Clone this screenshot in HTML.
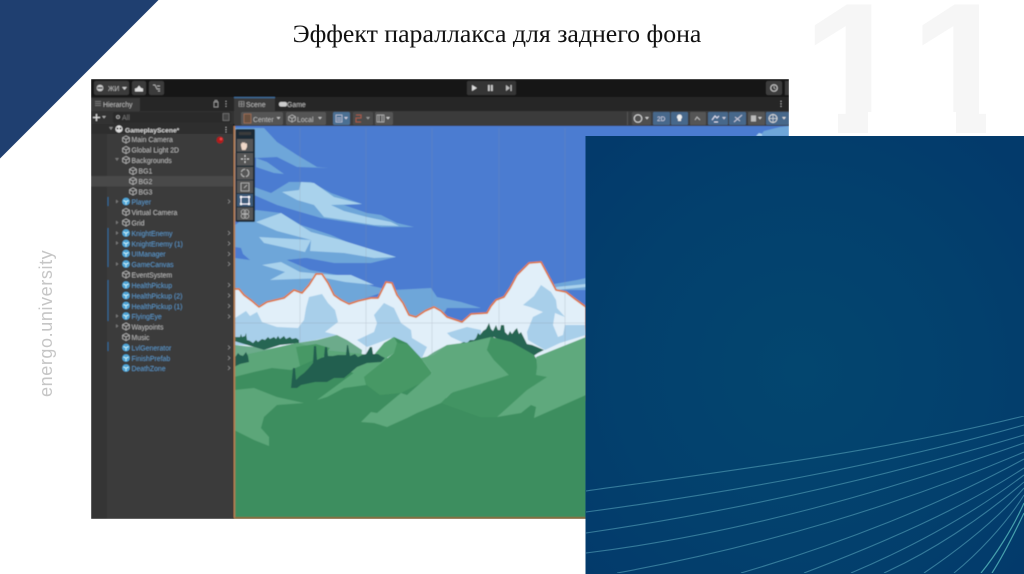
<!DOCTYPE html>
<html lang="ru"><head><meta charset="utf-8"><title>Эффект параллакса</title>
<style>
html,body{margin:0;padding:0;background:#fff;width:1024px;height:574px;overflow:hidden}
svg{display:block;position:absolute;left:0;top:0}
.u{font-family:"Liberation Sans",sans-serif;font-size:6.9px;fill:#b8b8b8}
.b{fill:#5b97c8}
.i{fill:none;stroke:#b5b5b5;stroke-width:.8}
</style></head><body>
<svg width="1024" height="574" viewBox="0 0 1024 574" xmlns="http://www.w3.org/2000/svg">
<defs>
<filter id="s" x="0" y="0" width="100%" height="100%"><feGaussianBlur stdDeviation=".4"/></filter>
<filter id="l" x="0" y="0" width="100%" height="100%"><feGaussianBlur stdDeviation=".3"/></filter>
<clipPath id="sc"><rect x="235" y="126" width="554" height="392"/></clipPath>
<radialGradient id="p" gradientUnits="userSpaceOnUse" cx="800" cy="370" r="300">
<stop offset="0" stop-color="#03466f"/><stop offset=".6" stop-color="#03406d"/><stop offset="1" stop-color="#033a6b"/></radialGradient>
<g id="c"><path class="i" d="M0-3.600 3.400-1.800V1.800L0 3.600-3.400 1.800V-1.800ZM-3.400-1.800 0 0 3.400-1.800M0 0V3.600"/></g>
<g id="q"><circle r="3.800" fill="#4fa6d8"/><path d="M-2.500-1 0 .2 2.500-1M0 .2V3" stroke="#dff" stroke-width=".7" fill="none"/></g>
</defs>
<polygon points="0,0 158.500,0 0,158.500" fill="#1f3f70"/>
<text x="802" y="133" font-family="Liberation Sans,sans-serif" font-weight="700" font-size="187" letter-spacing="14" fill="#f6f6f6">11</text>
<g fill="#fff"><rect x="790" y="112" width="48" height="24"/><rect x="868" y="112" width="88" height="24"/><rect x="986" y="112" width="38" height="24"/></g>
<text x="497" y="42" text-anchor="middle" font-family="Liberation Serif,serif" font-size="25.800" fill="#111">Эффект параллакса для заднего фона</text>
<text transform="translate(52,397) rotate(-90)" font-family="Liberation Sans,sans-serif" font-size="18" letter-spacing=".6" fill="#c6c6c6">energo.university</text>

<g filter="url(#s)">
<rect x="91" y="79" width="698" height="440" fill="#383838"/>
<rect x="91" y="79" width="698" height="18" fill="#191919"/>
<rect x="91" y="97" width="698" height="14" fill="#272727"/>
<rect x="91" y="98" width="49" height="13" fill="#3a3a3a"/>
<rect x="234" y="98" width="41" height="13" fill="#3a3a3a"/>
<rect x="234" y="97" width="41" height="1.200" fill="#3f6f9f"/>
<rect x="91" y="111" width="143" height="13" fill="#333"/>
<rect x="113" y="112" width="118" height="11" rx="2" fill="#2a2a2a"/>
<rect x="234" y="111" width="555" height="15" fill="#3b3b3b"/>
<rect x="91" y="124" width="143" height="10" fill="#2d2d2d"/>
<rect x="107" y="134" width="127" height="385" fill="#3a3a3a"/>
<rect x="91" y="134" width="16" height="385" fill="#343434"/>
<rect x="91" y="176" width="143" height="10.500" fill="#4a4a4a"/>
<rect x="233" y="124" width="1.500" height="395" fill="#1c1c1c"/>

<!-- top toolbar -->
<rect x="94" y="81" width="35" height="14" rx="2" fill="#3a3a3a"/>
<circle cx="100" cy="88" r="3.300" fill="#ccc"/><rect x="97.500" y="87.300" width="5" height="1.400" fill="#333"/>
<text x="108" y="91" class="u">ЖИ</text><path d="M122 87h5l-2.500 3z" fill="#ccc"/>
<rect x="132" y="81" width="14" height="14" rx="2" fill="#3a3a3a"/><path d="M135 91.500v-3l2-.5 2-2.500 2 2.500 2 .5v3z" fill="#ddd"/>
<rect x="149" y="81" width="15" height="14" rx="2" fill="#3a3a3a"/><path d="M153 85h2l2 4h3M157 86h3M158 91h2" stroke="#aaa" fill="none"/>
<rect x="467" y="81" width="49" height="14" rx="1" fill="#343434"/>
<path d="M472 85v6l5-3z" fill="#ddd"/><rect x="488" y="85" width="1.800" height="6" fill="#ccc"/><rect x="491" y="85" width="1.800" height="6" fill="#ccc"/>
<path d="M506 85v6l4-3zM510.500 85h1.200v6h-1.200z" fill="#bbb"/>
<rect x="766" y="81" width="16" height="14" rx="2" fill="#3c3c3c"/><circle cx="774" cy="88" r="3.300" fill="none" stroke="#ccc"/><path d="M774 86v2l1.500 1" stroke="#ccc" fill="none" stroke-width=".7"/>
<rect x="785" y="81" width="4" height="14" fill="#3c3c3c"/>

<!-- tabs -->
<path d="M95 101.500h6M95 103.500h6M95 105.500h6" stroke="#888" stroke-width=".7"/>
<text x="103" y="107" class="u">Hierarchy</text>
<path d="M214 102h4v5h-4zM215 102v-1.500h2V102" stroke="#aaa" stroke-width=".7" fill="none"/>
<path d="M226 101v.8M226 103.500v.8M226 106v.8" stroke="#bbb" stroke-width="1.100"/>
<path d="M239 101.500h5v5h-5zM239 104h5M241.500 101.500v5" stroke="#aaa" stroke-width=".6" fill="none"/>
<text x="246" y="107" class="u">Scene</text>
<rect x="279" y="102" width="8" height="4.500" rx="2" fill="#ccc"/><text x="287" y="107" class="u">Game</text>
<path d="M781 101v.8M781 103.500v.8M781 106v.8" stroke="#ccc" stroke-width="1.100"/>

<!-- hierarchy search row -->
<path d="M93 117.500h7M96.500 114v7" stroke="#ddd" stroke-width="1.300"/><path d="M102 116h4l-2 2.500z" fill="#aaa"/>
<circle cx="118" cy="117" r="1.500" class="i"/><text x="122" y="120" font-family="Liberation Sans,sans-serif" font-size="7" fill="#777">All</text>
<rect x="223" y="113.500" width="6" height="7" fill="#444" stroke="#888" stroke-width=".6"/>

<!-- scene toolbar -->
<g fill="#555"><rect x="241" y="112" width="42" height="13" rx="1.500"/><rect x="286" y="112" width="40" height="13" rx="1.500"/><rect x="333" y="112" width="17" height="13" rx="1.500" fill="#4b6f93"/><rect x="353" y="112" width="20" height="13" rx="1.500" fill="#4b4b4b"/><rect x="375" y="112" width="18" height="13" rx="1.500"/></g>
<rect x="244" y="114" width="7" height="9" fill="#6b5140" stroke="#b5785a" stroke-width=".6"/>
<text x="253" y="122" class="u">Center</text><path d="M276.500 117h4l-2 2.500z" fill="#bbb"/>
<use href="#c" x="292" y="118.500"/>
<text x="297" y="122" class="u">Local</text><path d="M318 117h4l-2 2.500z" fill="#bbb"/>
<path d="M336 115h6v7h-6zM337 118h4M337 120h4" stroke="#ccd" stroke-width=".7" fill="none"/><path d="M344 117h4l-2 2.500z" fill="#ccd"/>
<path d="M356 115h5v3h-5v4h5" stroke="#a65a4a" stroke-width="1" fill="none"/><path d="M366 117h4l-2 2.500z" fill="#999"/>
<path d="M377 115h7v7h-7zM379 115v7M382 115v7" stroke="#bbb" stroke-width=".7" fill="none"/><path d="M386 117h4l-2 2.500z" fill="#ccc"/>
<rect x="627" y="112" width="1" height="13" fill="#555"/>
<rect x="632" y="112" width="19" height="13" rx="1.500" fill="#4f4f4f"/><circle cx="638" cy="118.500" r="3.800" fill="none" stroke="#ddd"/><path d="M645 117h4l-2 2.500z" fill="#ccc"/>
<g fill="#47688b"><rect x="653" y="112" width="17" height="13" rx="1"/><rect x="671" y="112" width="17" height="13" rx="1"/><rect x="708" y="112" width="20" height="13" rx="1"/><rect x="729" y="112" width="17" height="13" rx="1"/><rect x="766" y="112" width="23" height="13" rx="1"/></g>
<rect x="690" y="112" width="16" height="13" rx="1" fill="#555"/><rect x="748" y="112" width="17" height="13" rx="1" fill="#555"/>
<text x="657" y="121" font-family="Liberation Sans,sans-serif" font-size="6.500" fill="#dde">2D</text>
<path d="M679.500 114.500a2.500 2.500 0 0 1 1.500 4.500v2h-3v-2a2.500 2.500 0 0 1 1.500-4.500z" fill="#eee"/>
<path d="M695 120l2-3 3 3" stroke="#bbb" fill="none"/>
<path d="M712 120l3-4 2 2 2-2M714 122h4" stroke="#dde" stroke-width="1.100" fill="none"/><path d="M722 117h4l-2 2.500z" fill="#ccd"/>
<path d="M734 122l8-7M735 117l5 4" stroke="#ccd" stroke-width=".9"/>
<rect x="751" y="115.500" width="5" height="6" fill="#bbb"/><path d="M758 117h4l-2 2.500z" fill="#ccc"/>
<circle cx="773" cy="118.500" r="4" fill="none" stroke="#ddd"/><path d="M769 118.500h8M773 114.500v8" stroke="#ddd" stroke-width=".7"/><path d="M782 117h4l-2 2.500z" fill="#ddd"/>

<!-- hierarchy -->
<path d="M109 127h4l-2 3z" fill="#888"/>
<circle cx="119" cy="129" r="3.600" fill="#ddd"/><circle cx="117.500" cy="128.500" r="1" fill="#333"/><circle cx="120.500" cy="128.500" r="1" fill="#333"/>
<text x="125" y="132.300" class="u" style="font-weight:700;font-size:6.700px;fill:#d4d4d4">GameplayScene*</text>
<path d="M226 127v.8M226 129.300v.8M226 131.600v.8" stroke="#ccc" stroke-width="1.100"/>
<use href="#c" x="126" y="139.500"/><text x="131.500" y="142" class="u">Main Camera</text>
<circle cx="220" cy="140" r="3.400" fill="#b01f1f"/><circle cx="221" cy="139" r="1.400" fill="#e44"/>
<use href="#c" x="126" y="150"/><text x="131.500" y="152.500" class="u">Global Light 2D</text>
<path d="M115 158h4l-2 3z" fill="#777"/><use href="#c" x="126" y="160"/><text x="131.500" y="163" class="u">Backgrounds</text>
<use href="#c" x="133" y="171"/><text x="138.500" y="173.500" class="u">BG1</text>
<use href="#c" x="133" y="181"/><text x="138.500" y="184" class="u">BG2</text>
<use href="#c" x="133" y="191.500"/><text x="138.500" y="194.300" class="u">BG3</text>
<g fill="#777"><path d="M116 199.500v4l2.500-2zM116 220.500v4l2.500-2zM116 231v4l2.500-2zM116 241v4l2.500-2zM116 262v4l2.500-2zM116 314v4l2.500-2zM116 324v4l2.500-2z"/></g>
<g fill="#2d6a9a"><rect x="107.500" y="197" width="1" height="9"/><rect x="107.500" y="228" width="1" height="39"/><rect x="107.500" y="280" width="1" height="41"/><rect x="107.500" y="342" width="1" height="9"/></g>
<use href="#q" x="126" y="201.500"/><text x="131.500" y="204.700" class="u b">Player</text>
<use href="#c" x="126" y="212"/><text x="131.500" y="215" class="u">Virtual Camera</text>
<use href="#c" x="126" y="222.500"/><text x="131.500" y="225.500" class="u">Grid</text>
<use href="#q" x="126" y="233"/><text x="131.500" y="236" class="u b">KnightEnemy</text>
<use href="#q" x="126" y="243.500"/><text x="131.500" y="246.500" class="u b">KnightEnemy (1)</text>
<use href="#q" x="126" y="253.500"/><text x="131.500" y="256.700" class="u b">UIManager</text>
<use href="#q" x="126" y="264"/><text x="131.500" y="267" class="u b">GameCanvas</text>
<use href="#c" x="126" y="274.500"/><text x="131.500" y="277.300" class="u">EventSystem</text>
<use href="#q" x="126" y="285"/><text x="131.500" y="288" class="u b">HealthPickup</text>
<use href="#q" x="126" y="295.500"/><text x="131.500" y="298.400" class="u b">HealthPickup (2)</text>
<use href="#q" x="126" y="305.500"/><text x="131.500" y="308.800" class="u b">HealthPickup (1)</text>
<use href="#q" x="126" y="316"/><text x="131.500" y="319" class="u b">FlyingEye</text>
<use href="#c" x="126" y="326.500"/><text x="131.500" y="329.400" class="u">Waypoints</text>
<use href="#c" x="126" y="337"/><text x="131.500" y="339.900" class="u">Music</text>
<use href="#q" x="126" y="347.500"/><text x="131.500" y="350.400" class="u b">LvlGenerator</text>
<use href="#q" x="126" y="358"/><text x="131.500" y="360.800" class="u b">FinishPrefab</text>
<use href="#q" x="126" y="368"/><text x="131.500" y="371.200" class="u b">DeathZone</text>
<path d="M228 199.500l2 2-2 2M228 231l2 2-2 2M228 241.500l2 2-2 2M228 252l2 2-2 2M228 262l2 2-2 2M228 283l2 2-2 2M228 293.500l2 2-2 2M228 304l2 2-2 2M228 314.500l2 2-2 2M228 345.500l2 2-2 2M228 356l2 2-2 2M228 366l2 2-2 2" stroke="#888" stroke-width=".8" fill="none"/>

<!-- scene -->
<g clip-path="url(#sc)">
<rect x="235" y="126" width="554" height="392" fill="#4c7bd1"/>
<g fill="#6ea6d9">
<polygon points="264,128 277,142 297,155 317,167 329,168 297,167 277,157 257,158 235,153 235,128"/>
<polygon points="256,158 267,162 284,174 274,173 256,167"/>
<polygon points="254,187 271,193 289,182 311,182 331,193 362,204 344,205 367,213 381,215 397,223 414,227 381,227 347,222 321,218 297,211 277,205 254,195"/>
<polygon points="235,225 256,210 281,213 301,225 331,235 361,248 396,257 371,263 334,263 307,258 287,260 310,270 354,278 372,286 390,290 330,310 235,310"/>
<polygon points="394,290 431,288 437,297 461,302 481,308 447,308 440,320 400,320"/>
<polygon points="554,284 577,280 586,278 586,290 557,290"/>
</g>
<polygon points="235,247 241,248 243,254 250,260 235,258" fill="#4c7bd1"/>
<polygon points="267,223 280,223 285,226 274,227" fill="#4c7bd1"/>
<polygon points="287,260 305,258 330,263 345,268 320,268 300,265" fill="#4c7bd1"/>
<g fill="#a9d2ec">
<polygon points="282,192 299,190 301,182 314,183 334,197 362,204 331,205 344,211 367,217 391,222 399,226 374,225 344,220 324,217 314,205 297,200"/>
<polygon points="256,222 281,213 311,232 341,240 396,257 374,258 344,253 310,251 311,240 277,231"/>
<polygon points="259,237 311,240 305,252 264,243"/>
<polygon points="262,265 281,262 300,272 334,275 351,275 374,285 345,282 325,278 270,280 285,272"/>
<polygon points="556,287 586,284 586,287 556,290"/>
</g>
<!-- mountains -->
<polygon points="234,289 239,289 244,295 252,301 259,307 267,302 284,298 294,290 302,293 309,285 316,274 322,274 328,283 334,295 341,300 349,304 358,301 371,298 378,298 386,282 392,283 397,295 403,303 409,315 416,317 425,311 434,307 441,311 447,317 462,322 471,314 487,313 491,306 496,300 504,297 510,288 517,275 529,263 541,262 548,275 556,290 566,292 575,299 586,307 586,400 234,400" fill="#e1eff9" stroke="#de7a4a" stroke-width="1.800" stroke-linejoin="round"/>
<g fill="#a8cfea">
<polygon points="235,318 246,311 250,316 257,312 262,322 277,327 298,328 304,320 306,308 309,297 322,294 328,303 335,310 338,322 325,332 337,335 315,340 297,343 260,345 235,345"/>
<polygon points="374,315 384,303 394,308 401,323 411,330 412,338 427,347 422,358 391,338 367,347 357,340 374,332 377,323"/>
<polygon points="523,305 534,296 541,285 551,292 556,300 557,308 565,317 555,313 553,325 558,337 563,335 565,325 585,325 586,335 560,343 545,350 528,340 527,332 533,317 543,312 530,307"/>
<polygon points="447,333 467,327 481,330 481,340 464,343 451,337"/>
</g>
<path d="M235 323h351M300 128v390M366 128v390M432 128v390M499 128v390M565 128v390" stroke="#8a93a0" stroke-width=".7" stroke-opacity=".3"/>
<!-- back hills -->
<polygon points="235,345 254,347 264,350 297,343 317,340 337,335 347,340 362,350 361,362 235,362" fill="#6cab8b"/>
<polygon points="422,360 434,352 447,345 461,345 461,355 434,365" fill="#6cab8b"/>
<!-- far trees -->
<polygon points="234,337 240,337 241,334 242,337 245,336 246,333 247,340 250,341 253,343 256,340 258,342 262,339 265,340 268,337 270,339 274,337 276,339 278,336 280,339 284,336 286,339 290,337 292,339 296,338 299,340 299,343 280,345 264,350 254,347 234,341" fill="#286653"/>
<polygon points="461,343 464,342 467,343 470,340 474,340 476,338 478,333 480,335 483,331 486,329 489,323 491,329 493,331 496,325 498,330 500,330 501,325 504,325 505,332 508,335 510,331 512,334 515,330 517,328 519,334 521,332 523,336 525,340 527,344 532,345 537,347 544,350 538,353 532,357 526,356 521,353 508,345 494,337 480,343 467,348 461,349" fill="#286653"/>
<!-- mid green -->
<polygon points="234,357 267,350 297,343 325,350 362,354 400,360 400,400 234,400" fill="#5ca679"/>
<polygon points="296,347 316,344 330,348 316,366 300,366" fill="#479865"/>
<!-- main ground -->
<polygon points="234,377 254,372 272,368 291,370 314,360 340,368 364,377 394,353 394,337 407,343 421,358 447,400 491,337 511,342 534,355 547,377 586,395 586,518 234,518" fill="#3d8e5f"/>
<!-- light shapes -->
<polygon points="384,343 394,337 398,343 407,344 421,358 432,373 421,383 401,393 380,395 364,383 364,377 394,353" fill="#479865"/>
<polygon points="317,400 340,383 367,363 384,343 394,337 397,343 394,353 374,367 364,377 366,385 344,388 327,397" fill="#5aa778"/>
<polygon points="361,422 371,412 377,413 401,393 407,395 432,373 421,358 434,355 447,345 470,342 491,337 487,350 494,360 509,375 494,380 461,390 451,393 441,403 417,413 407,418 387,427 374,423" fill="#5fa97d"/>
<polygon points="491,337 511,342 534,355 537,367 536,375 547,377 527,390 497,417 480,417 441,403 451,393 461,390 494,380 509,375 494,360 487,350" fill="#439463"/>
<polygon points="536,357 586,337 586,395 534,418 536,407 531,405 521,413 497,417 527,390 547,377 536,375 537,367" fill="#5fa97d"/>
<polygon points="234,390 254,388 277,397 304,403 277,405 264,417 261,428 269,437 269,446 254,440 234,430" fill="#5ca679"/>
<!-- dark trees -->
<polygon points="291,388 292,378 293,368 295,368 296,380 300,376 304,373 308,369 313,363 314,346 316,346 317,360 321,358 324,357 325,347 327,347 328,356 333,356 338,355 342,355 346,355 347,345 348,345 350,356 355,354 358,357 362,355 366,354 370,347 372,347 373,354 378,354 381,356 385,358 381,362 367,363 357,367 350,373 344,378 334,378 327,382 315,382 301,385 297,388" fill="#245f50"/>
<polygon points="234,358 236,356 238,353 240,355 243,356 246,352 248,356 249,362 240,364 234,367" fill="#245f50"/>
<path d="M760 136l4-5 8-2 8-2 9-1v10z" fill="#6ea6d9"/>
<path d="M756 136l3-3 3 1v2z" fill="#a9d2ec"/>
</g>
<rect x="234" y="517" width="352" height="1.800" fill="#8c6a3a"/>
<rect x="233.500" y="126" width="1.800" height="392" fill="#b17b53"/>
<!-- gizmo toolbox -->
<rect x="235.500" y="129" width="19.500" height="93" rx="1.500" fill="#1d2a35"/>
<rect x="239" y="132" width="12" height="3" fill="#3a3a3a"/>
<g fill="#565656"><rect x="237" y="139" width="16" height="12.500"/><rect x="237" y="153" width="16" height="12.500"/><rect x="237" y="167" width="16" height="12.500"/><rect x="237" y="180.500" width="16" height="12.500"/><rect x="237" y="207.500" width="16" height="12.500"/></g>
<rect x="237" y="194" width="16" height="12.500" fill="#3d5a78"/>
<path d="M241 146v-3l1 1v-2l1 1v-1l1 1 1-1v2l1-1 1 1v3l-1.500 3h-3.500z" fill="#f0d8c8"/>
<path d="M245 155v2M245 161v2M241 159h2M247 159h2" stroke="#ccc" stroke-width="1.200"/><circle cx="245" cy="159" r=".8" fill="#ccc"/>
<circle cx="245" cy="173" r="3.800" fill="none" stroke="#bbb" stroke-dasharray="5 1.500"/>
<path d="M241 183h8v8h-8zM244 188l3-3" fill="none" stroke="#bbb" stroke-width=".8"/>
<path d="M241 197h8v7h-8z" fill="none" stroke="#eef" stroke-width="1"/><path d="M240 196h2v2h-2zM248 196h2v2h-2zM240 203h2v2h-2zM248 203h2v2h-2z" fill="#fff"/>
<circle cx="243.500" cy="212" r="2.300" fill="none" stroke="#bbb" stroke-width=".7"/><circle cx="246.500" cy="212" r="2.300" fill="none" stroke="#bbb" stroke-width=".7"/><circle cx="243.500" cy="216" r="2.300" fill="none" stroke="#bbb" stroke-width=".7"/><circle cx="246.500" cy="216" r="2.300" fill="none" stroke="#bbb" stroke-width=".7"/>
</g>

<!-- blue panel -->
<rect x="585.500" y="136" width="438.500" height="438" fill="url(#p)"/>
<g filter="url(#l)">
<g fill="none" stroke="#4a94ae" stroke-width="1.100" stroke-opacity=".7">
<path d="M586 491C720 472 880 452 1024 416"/>
<path d="M586 512C720 494 880 466 1024 425"/>
<path d="M586 533C730 512 880 478 1024 435"/>
<path d="M586 553C740 534 890 490 1024 443"/>
<path d="M617 573C760 547 900 505 1024 452"/>
<path d="M741 573C840 544 940 505 1024 459"/>
<path d="M804 573C880 544 960 510 1024 468"/>
<path d="M851 573C910 548 970 516 1024 475"/>
<path d="M884 573C930 552 980 520 1024 482"/>
<path d="M924 573C955 552 995 522 1024 488"/>
<path d="M954 573C975 556 1005 526 1024 495"/>
</g>
<g fill="none" stroke="#5cc0c2" stroke-width="1.200" stroke-opacity=".75">
<path d="M981 573C995 556 1013 528 1024 503"/>
<path d="M992 573C1003 556 1014 534 1024 513"/>
</g>
</g>
</svg>
</body></html>
